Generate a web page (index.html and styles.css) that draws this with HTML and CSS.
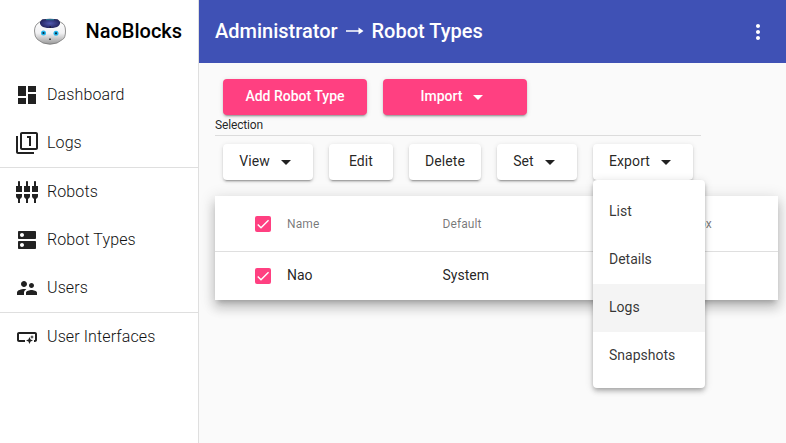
FILE: index.html
```html
<!DOCTYPE html>
<html lang="en">
<head>
<meta charset="utf-8">
<title>NaoBlocks</title>
<link rel="stylesheet" href="styles.css">
</head>
<body>
<div class="app">
  <aside class="sidebar">
    <div class="brand">
      <svg class="logo" viewBox="0 0 32 28">
        <defs>
          <linearGradient id="face" x1="0" y1="0" x2="0" y2="1"><stop offset="0" stop-color="#ffffff"/><stop offset=".55" stop-color="#f1f1f3"/><stop offset="1" stop-color="#999"/></linearGradient>
          <radialGradient id="cap"><stop offset="0" stop-color="#5058b0"/><stop offset="1" stop-color="#24245f"/></radialGradient>
        </defs>
        <path d="M9 1.500H23L27 4.500Q31.500 6 31.500 13T28.500 21.500L23 25Q16 27.500 9 25L3.500 21.500Q.5 19 .5 13T5 4.500Z" fill="url(#face)" stroke="#777" stroke-width=".8"/>
        <path d="M8 1.500Q16 0 24 1.500L26 4Q26.500 7 23 9L19 10H13L9 9Q5.500 7 6 4Z" fill="url(#cap)"/>
        <path d="M12 1.700h8" stroke="#287f98" stroke-width="1"/>
        <path d="M15.500 8.500h1.500v1h-1.500z" fill="#111"/>
        <circle cx="9.500" cy="15" r="2.500" fill="#22b5ec"/><circle cx="22" cy="15.300" r="2.500" fill="#22b5ec"/>
        <circle cx="9.500" cy="15" r="1.100" fill="#08283c"/><circle cx="22" cy="15.300" r="1.100" fill="#08283c"/>
        <path d="M15 20.500h2v1.500h-2z" fill="#444"/>
      </svg>
      <span>NaoBlocks</span>
    </div>
    <nav>
      <a class="item"><svg class="icon" viewBox="0 0 24 24"><path d="M3 13h8V3H3v10zm0 8h8v-6H3v6zm10 0h8V11h-8v10zm0-18v6h8V3h-8z"/></svg><span>Dashboard</span></a>
      <a class="item"><svg class="icon" viewBox="0 0 24 24"><path d="M3 5H1v16c0 1.100.9 2 2 2h16v-2H3V5zm11 10h2V5h-4v2h2v8zm7-14H7c-1.100 0-2 .9-2 2v14c0 1.100.9 2 2 2h14c1.100 0 2-.9 2-2V3c0-1.100-.9-2-2-2zm0 16H7V3h14v14z"/></svg><span>Logs</span></a>
      <hr class="divider">
      <a class="item"><svg class="icon" viewBox="0 0 24 24"><path d="M5 2c0-.55-.45-1-1-1s-1 .45-1 1v4H1v6h6V6H5V2zm4 14c0 1.300.84 2.400 2 2.820V23h2v-4.180c1.160-.41 2-1.510 2-2.820v-2H9v2zm-8 0c0 1.300.84 2.400 2 2.820V23h2v-4.180C6.160 18.400 7 17.300 7 16v-2H1v2zM21 6V2c0-.55-.45-1-1-1s-1 .45-1 1v4h-2v6h6V6h-2zm-8-4c0-.55-.45-1-1-1s-1 .45-1 1v4H9v6h6V6h-2V2zm4 14c0 1.300.84 2.400 2 2.820V23h2v-4.180c1.160-.41 2-1.510 2-2.820v-2h-6v2z"/></svg><span>Robots</span></a>
      <a class="item"><svg class="icon" viewBox="0 0 24 24"><path d="M20 13H4c-.55 0-1 .45-1 1v6c0 .55.45 1 1 1h16c.55 0 1-.45 1-1v-6c0-.55-.45-1-1-1zM7 19c-1.100 0-2-.9-2-2s.9-2 2-2 2 .9 2 2-.9 2-2 2zM20 3H4c-.55 0-1 .45-1 1v6c0 .55.45 1 1 1h16c.55 0 1-.45 1-1V4c0-.55-.45-1-1-1zM7 9c-1.100 0-2-.9-2-2s.9-2 2-2 2 .9 2 2-.9 2-2 2z"/></svg><span>Robot Types</span></a>
      <a class="item"><svg class="icon" viewBox="0 0 24 24"><path d="M16.500 12c1.380 0 2.490-1.120 2.490-2.500S17.880 7 16.500 7C15.120 7 14 8.120 14 9.500s1.120 2.500 2.500 2.500zM9 11c1.660 0 2.990-1.340 2.990-3S10.660 5 9 5C7.340 5 6 6.340 6 8s1.340 3 3 3zm7.500 3c-1.830 0-5.500.92-5.500 2.750V19h11v-2.250c0-1.830-3.670-2.750-5.500-2.750zM9 13c-2.330 0-7 1.170-7 3.500V19h7v-2.250c0-.85.33-2.340 2.370-3.470C10.500 13.100 9.660 13 9 13z"/></svg><span>Users</span></a>
      <hr class="divider">
      <a class="item"><svg class="icon" viewBox="0 0 24 24"><path d="M22 9v6c0 1.100-.9 2-2 2h-1v-2h1V9H4v6h6v2H4c-1.100 0-2-.9-2-2V9c0-1.100.9-2 2-2h16c1.100 0 2 .9 2 2zm-7.500 10 1.090-2.410L18 15.500l-2.410-1.090L14.500 12l-1.090 2.410L11 15.500l2.410 1.090L14.500 19zm2.500-5 .62-1.380L19 12l-1.380-.62L17 10l-.62 1.380L15 12l1.380.62L17 14z"/></svg><span>User Interfaces</span></a>
    </nav>
  </aside>
  <div class="page">
    <header class="toolbar">
      <h1>Administrator <svg class="arrow" viewBox="0 0 18 10"><path d="M0 4.200h12.500V1.500L17.500 5l-5 3.500V5.800H0z"/></svg> Robot Types</h1>
      <svg class="more" viewBox="0 0 24 24"><path d="M12 8c1.100 0 2-.9 2-2s-.9-2-2-2-2 .9-2 2 .9 2 2 2zm0 2c-1.100 0-2 .9-2 2s.9 2 2 2 2-.9 2-2-.9-2-2-2zm0 6c-1.100 0-2 .9-2 2s.9 2 2 2 2-.9 2-2-.9-2-2-2z"/></svg>
    </header>
    <main>
      <div class="row">
        <button class="btn accent">Add Robot Type</button>
        <button class="btn accent">Import<i class="caret"></i></button>
      </div>
      <section class="group">
        <div class="group-title">Selection</div>
        <div class="row">
          <button class="btn w-view">View<i class="caret"></i></button>
          <button class="btn w-edit">Edit</button>
          <button class="btn w-delete">Delete</button>
          <button class="btn w-set">Set<i class="caret"></i></button>
          <div class="menu-anchor">
            <button class="btn w-export">Export<i class="caret"></i></button>
            <div class="menu">
              <div class="option">List</div>
              <div class="option">Details</div>
              <div class="option active">Logs</div>
              <div class="option">Snapshots</div>
            </div>
          </div>
        </div>
      </section>
      <div class="table">
        <div class="tr head">
          <span class="check"><svg viewBox="0 0 24 24"><path d="M4.100 12.700 9 17.600 20.300 6.300"/></svg></span>
          <span>Name</span><span>Default</span><span class="toolbox">Toolbox</span>
        </div>
        <div class="tr">
          <span class="check"><svg viewBox="0 0 24 24"><path d="M4.100 12.700 9 17.600 20.300 6.300"/></svg></span>
          <span class="cell">Nao</span><span class="cell">System</span><span></span>
        </div>
      </div>
    </main>
  </div>
</div>
</body>
</html>
```
FILE: styles.css
```css
* { box-sizing: border-box; }
body {
  margin: 0;
  background: #fafafa;
  color: rgba(0, 0, 0, .87);
  font-family: Roboto, "Liberation Sans", sans-serif;
  font-size: 14px;
}
.app { display: flex; height: 443px; overflow: hidden; }
.sidebar { width: 199px; flex: none; background: #fff; border-right: 1px solid #dfdfdf; }
.brand {
  display: flex; align-items: center; height: 63px; padding-left: 34px; gap: 19.500px;
  color: #000; font-size: 20px; font-weight: 500;
}
.brand span { padding-bottom: 2px; }
.logo { width: 32px; height: 28px; }
nav { padding-top: 8px; }
.item { display: flex; align-items: center; height: 48px; padding-left: 15px; gap: 8px; font-size: 16px; }
.item span { padding-bottom: 2px; color: #111; font-weight: 350; letter-spacing: .11px; }
.icon { width: 24px; height: 24px; fill: #212121; }
.divider { margin: 0; border: 0; border-top: 1px solid #dfdfdf; }
.page { flex: 1; min-width: 0; }
.toolbar {
  display: flex; align-items: center; justify-content: space-between;
  height: 63px; padding: 0 16px; background: #3f51b5; color: #fff;
}
.toolbar h1 { margin: 0; padding-bottom: 2px; font-size: 20px; font-weight: 500; }
.arrow { width: 18px; height: 10px; margin: 0 3px; fill: #fff; vertical-align: 2px; }
.more { width: 24px; height: 24px; fill: #fff; }
main { padding: 16px 8px 0 16px; }
.row { display: flex; gap: 16px; padding-left: 8px; }
.btn {
  display: flex; align-items: center; justify-content: center;
  height: 36px; padding: 0 0 2px; border: 0; border-radius: 4px;
  background: #fff; color: rgba(0, 0, 0, .87);
  font: 400 14px/34px Roboto, "Liberation Sans", sans-serif; letter-spacing: .1px;
  box-shadow: 0 3px 1px -2px rgba(0,0,0,.2), 0 2px 2px rgba(0,0,0,.14), 0 1px 5px rgba(0,0,0,.12);
}
.accent { width: 144px; background: #ff4081; color: #fff; font-weight: 500; letter-spacing: 0; }
.caret { margin: 3px 6px 0 11px; border: 5px solid transparent; border-top-color: currentColor; border-bottom: 0; }
.w-view { width: 90px; }
.w-edit { width: 64px; }
.w-delete { width: 72px; }
.w-set { width: 80px; }
.w-export { width: 100px; }
.group-title {
  width: 486px; height: 21px; margin-bottom: 8px; padding-top: 3px;
  border-bottom: 1px solid #dcdcdc; font-size: 12px; line-height: 14px; letter-spacing: -.15px;
}
.menu-anchor { position: relative; }
.menu {
  position: absolute; top: 36px; left: 0; z-index: 2; width: 112px; padding: 8px 0;
  background: #fff; border-radius: 4px;
  box-shadow: 0 2px 4px -1px rgba(0,0,0,.2), 0 4px 5px rgba(0,0,0,.14), 0 1px 10px rgba(0,0,0,.12);
}
.option { height: 48px; padding-left: 16px; line-height: 46px; color: rgba(0,0,0,.8); }
.active { background: #f4f4f4; }
.table {
  width: 563px; margin-top: 16px; background: #fff;
  box-shadow: 0 5px 5px -3px rgba(0,0,0,.2), 0 8px 10px 1px rgba(0,0,0,.14), 0 3px 14px 2px rgba(0,0,0,.12);
}
.tr {
  display: grid; grid-template-columns: 32px 155.500px 208px 1fr; align-items: center;
  height: 48px; padding-left: 40px;
}
.head { height: 56px; border-bottom: 1px solid #dfdfdf; color: rgba(0,0,0,.54); font-size: 12px; letter-spacing: .1px; }
.toolbox { padding-left: 18px; }
.cell { padding-bottom: 2px; }
.check { width: 16px; height: 16px; border-radius: 2px; background: #ff4081; }
.check svg { display: block; width: 16px; height: 16px; fill: none; stroke: #fff; stroke-width: 2.100; }
```
